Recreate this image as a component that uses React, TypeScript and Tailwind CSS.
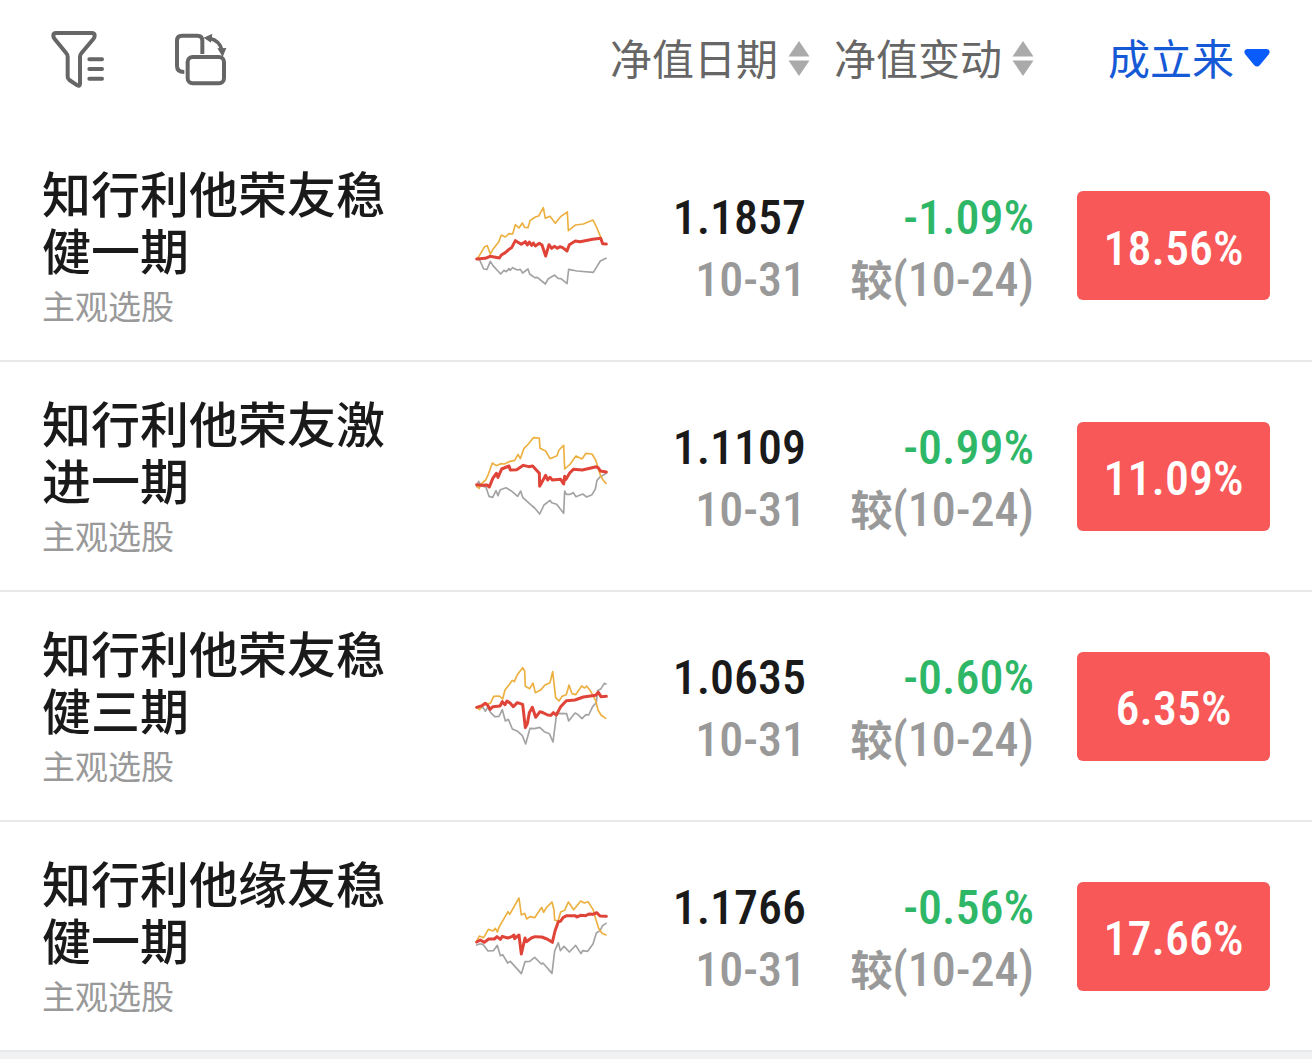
type Fund = {
  name: string;
  kind: string;
  value: string;
  date: string;
  change: string;
  since: string;
  total: string;
  high: string;
  main: string;
  low: string;
};

const funds: Fund[] = [
  {
    name: "知行利他荣友稳健一期",
    kind: "主观选股",
    value: "1.1857",
    date: "10-31",
    change: "-1.09%",
    since: "(10-24)",
    total: "18.56%",
    high: "50,192 58,182 74,155 82,152 91,177 99,163 116,141 124,120 136,126 147,116 158,117 166,89 177,99 187,84 194,97 204,98 210,77 226,66 236,63 250,38 256,70 270,64 286,85 303,64 322,51 325,107 340,95 347,90 370,87 399,75 410,97 424,131 428,145 439,147",
    main: "50,192 76,190 90,184 118,189 124,180 136,173 147,163 155,158 166,137 184,148 196,140 202,150 208,141 215,151 220,144 226,153 238,145 246,150 257,183 267,149 275,160 284,154 292,160 300,155 308,158 321,168 328,149 346,138 360,140 398,133 422,130 428,146 439,147",
    low: "50,192 59,195 71,222 81,223 91,199 99,212 122,237 132,226 139,230 147,221 150,226 158,218 172,225 181,223 188,234 204,222 209,237 224,248 232,247 256,267 265,251 284,240 294,250 303,251 321,266 326,223 351,228 400,232 421,198 438,190",
  },
  {
    name: "知行利他荣友激进一期",
    kind: "主观选股",
    value: "1.1109",
    date: "10-31",
    change: "-0.99%",
    since: "(10-24)",
    total: "11.09%",
    high: "50,182 57,190 65,175 77,165 85,148 97,114 109,122 122,116 133,117 150,109 164,106 174,88 181,101 192,70 205,57 220,38 238,39 240,70 257,78 270,101 291,92 297,75 311,61 314,132 331,117 339,105 348,93 366,102 378,85 396,87 407,105 421,150 429,165 438,175",
    main: "50,179 63,181 81,180 88,186 98,161 109,145 114,157 125,132 147,123 151,135 170,134 190,121 206,125 218,123 231,137 238,145 239,184 257,151 263,165 270,157 277,165 302,163 311,177 314,154 318,163 329,144 340,133 367,135 409,125 416,130 421,138 439,141",
    low: "50,185 56,169 63,182 78,187 87,214 98,217 108,197 114,212 121,194 138,188 153,197 173,214 182,198 188,217 212,239 224,249 239,267 252,240 270,226 275,233 290,238 311,265 314,198 319,208 331,208 340,203 348,215 368,207 380,216 396,209 406,192 411,166 421,155 439,145",
  },
  {
    name: "知行利他荣友稳健三期",
    kind: "主观选股",
    value: "1.0635",
    date: "10-31",
    change: "-0.60%",
    since: "(10-24)",
    total: "6.35%",
    high: "50,158 59,164 68,148 77,146 91,145 101,124 118,123 128,132 135,105 149,87 157,76 163,80 171,61 188,38 194,48 196,94 209,101 219,84 226,113 243,104 255,90 270,83 278,50 287,128 297,138 306,124 319,119 327,90 336,116 347,119 365,93 374,99 380,93 392,109 407,137 414,165 423,180 437,190",
    main: "50,157 66,152 76,145 83,151 90,163 99,155 120,153 127,140 135,149 141,138 151,145 160,155 172,143 188,148 196,218 202,206 208,173 217,157 227,187 240,170 251,174 263,180 273,181 280,173 289,180 302,155 319,137 345,135 370,126 407,121 415,112 423,125 439,124",
    low: "50,158 69,157 76,169 83,157 92,173 104,185 117,184 127,164 136,198 145,193 157,222 173,229 187,242 197,267 210,220 224,221 239,217 253,230 268,236 279,261 290,175 320,176 326,198 345,174 353,178 366,191 378,179 386,180 398,155 409,143 413,107 423,101 433,85 438,87",
  },
  {
    name: "知行利他缘友稳健一期",
    kind: "主观选股",
    value: "1.1766",
    date: "10-31",
    change: "-0.56%",
    since: "(10-24)",
    total: "17.66%",
    high: "50,169 58,153 71,158 85,133 99,138 106,130 112,141 118,125 144,80 149,88 177,39 184,90 194,85 200,102 210,95 224,98 245,67 251,82 259,68 276,51 282,75 284,105 294,109 302,81 314,76 325,51 341,74 362,48 373,54 384,50 399,73 408,104 416,130 426,145 438,150",
    main: "50,171 61,165 73,172 86,162 103,162 111,155 121,163 127,154 143,159 155,155 162,150 164,161 177,150 184,207 195,159 199,170 214,159 225,155 245,156 261,162 277,172 285,138 295,110 301,109 310,97 320,92 346,92 350,96 362,91 377,92 387,87 399,88 410,83 420,93 439,94",
    low: "50,180 61,176 70,179 84,198 100,197 112,181 121,212 128,209 143,234 151,229 184,266 195,230 209,229 224,217 244,237 249,234 276,265 284,198 295,173 301,197 312,184 328,201 347,181 363,206 368,197 383,199 399,177 409,144 420,137 428,122 438,115",
  },
];

const digits =
  "font-['Roboto_Condensed','Liberation_Sans_Narrow','Liberation_Sans',sans-serif]";

function FilterIcon() {
  return (
    <svg
      className="h-[60px] w-14"
      viewBox="60 36 168 180"
      fill="none"
      stroke="#666"
      strokeWidth="12"
      strokeLinecap="round"
      strokeLinejoin="round"
      aria-hidden="true"
    >
      <path d="M78 51H185Q194 51 194 59Q194 64 190 69L154 112Q150 116 150 122V204Q149 212 142 208L118 192Q113 188 113 182V122Q113 116 109 112L74 69Q70 64 70 59Q70 51 78 51Z" />
      <path d="M178 130H216M178 159H216M178 188H216" />
    </svg>
  );
}

function RotateIcon() {
  return (
    <svg
      className="h-[60px] w-14"
      viewBox="429 36 168 180"
      fill="none"
      stroke="#666"
      strokeWidth="12"
      aria-hidden="true"
    >
      <path d="M517 114V74Q517 59 502 59H456Q441 59 441 74V150Q441 168 463 168" />
      <rect x="473" y="123" width="109" height="79" rx="15" />
      <path d="M538 67Q570 74 576 104" strokeWidth="11" />
      <path d="M521 65L547 53L543 80ZM578 123L562 97L589 96Z" fill="#666" stroke="none" />
    </svg>
  );
}

function SortArrows() {
  return (
    <svg className="h-9 w-[22px]" viewBox="0 0 22 36" fill="#aaa" aria-hidden="true">
      <path d="M11 0L21.500 15.500H0.500ZM11 35L21.500 19.500H0.500Z" />
    </svg>
  );
}

function Trend({ fund }: { fund: Fund }) {
  return (
    <svg
      className="block h-[100px] w-[140px]"
      viewBox="30 3 420 300"
      fill="none"
      strokeLinejoin="round"
      strokeLinecap="round"
      role="img"
      aria-label={fund.name}
    >
      <polyline points={fund.low} stroke="#a3a3a3" strokeWidth="5" />
      <polyline points={fund.high} stroke="#ecb040" strokeWidth="5" />
      <polyline points={fund.main} stroke="#e04438" strokeWidth="9" />
    </svg>
  );
}

export default function App() {
  return (
    <main
      lang="zh-CN"
      className="min-h-screen bg-[#f0f1f3] font-['Liberation_Sans','Noto_Sans_CJK_SC',sans-serif] text-[#1a1a1a]"
    >
      <table className="w-full table-fixed border-collapse bg-white">
        <colgroup>
          <col />
          <col className="w-[140px]" />
          <col className="w-[200px]" />
          <col className="w-[224px]" />
          <col className="w-[278px]" />
        </colgroup>
        <thead>
          <tr className="h-[131px] text-[42px] leading-[60px] text-[#666]">
            <th colSpan={2} className="p-0 pb-4 pl-[50px] font-normal">
              <div className="flex items-center gap-[67px]">
                <button type="button" aria-label="筛选">
                  <FilterIcon />
                </button>
                <button type="button" aria-label="切换">
                  <RotateIcon />
                </button>
              </div>
            </th>
            <th className="p-0 pb-3.5 font-normal">
              <button type="button" className="ml-auto flex items-center gap-2.5 whitespace-nowrap">
                <span className="pt-1">净值日期</span>
                <SortArrows />
              </button>
            </th>
            <th className="p-0 pb-3.5 font-normal">
              <button type="button" className="ml-auto flex items-center gap-2.5 whitespace-nowrap">
                <span className="pt-1">净值变动</span>
                <SortArrows />
              </button>
            </th>
            <th className="p-0 pr-[42px] pb-3.5 font-normal">
              <button
                type="button"
                className="ml-auto flex items-center gap-2.5 whitespace-nowrap text-[#1559d6]"
              >
                <span className="pt-1">成立来</span>
                <svg className="h-5 w-[26px]" viewBox="0 0 26 20" fill="#0a5cfa" aria-hidden="true">
                  <path d="M3 0H23Q27 1 25 5L16 16Q13 19 10 16L1 5Q-1 1 3 0Z" />
                </svg>
              </button>
            </th>
          </tr>
        </thead>
        <tbody>
          {funds.map((fund) => (
            <tr key={fund.name} className="h-[230px] border-b-2 border-[#e8e8e8]">
              <td className="p-0 pt-1 pr-[72px] pl-[42px]">
                <div className="text-[49px] leading-[57px] font-medium">{fund.name}</div>
                <div className="mt-1.5 text-[33px] leading-10 text-[#999]">{fund.kind}</div>
              </td>
              <td className="p-0">
                <Trend fund={fund} />
              </td>
              <td
                className={`p-0 pt-1.5 pr-1 text-right text-[48px] leading-[62px] font-medium ${digits}`}
              >
                <div>{fund.value}</div>
                <div className="text-[#999]">{fund.date}</div>
              </td>
              <td className={`p-0 pt-1.5 text-right text-[48px] leading-[62px] font-medium ${digits}`}>
                <div className="text-[#2fb768]">{fund.change}</div>
                <div className="flex h-[62px] items-center justify-end text-[#999]">
                  <span className="pt-1 font-['Liberation_Sans','Noto_Sans_CJK_SC',sans-serif] text-[42px] font-bold">
                    较
                  </span>
                  {fund.since}
                </div>
              </td>
              <td className="p-0 pr-[42px]">
                <div
                  className={`ml-auto flex h-[109px] w-[193px] items-center justify-center rounded-md bg-[#f85858] pt-1.5 text-[48px] font-medium text-white ${digits}`}
                >
                  {fund.total}
                </div>
              </td>
            </tr>
          ))}
        </tbody>
      </table>
    </main>
  );
}
